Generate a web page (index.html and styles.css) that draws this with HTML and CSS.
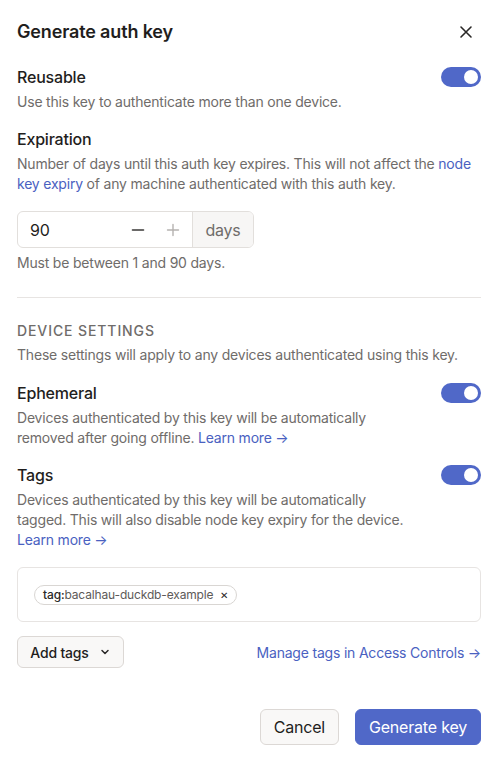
FILE: index.html
```html
<!DOCTYPE html>
<html lang="en">
<head>
<meta charset="utf-8">
<title>Generate auth key</title>
<link rel="stylesheet" href="styles.css">
</head>
<body>
<div class="dialog">
  <header class="dialog-header">
    <h1 class="dialog-title">Generate auth key</h1>
    <button class="close-btn" aria-label="Close">
      <svg width="14" height="14" viewBox="0 0 14 14" fill="none" stroke="#2a2827" stroke-width="1.6" stroke-linecap="round"><path d="M2 2 L12 12 M12 2 L2 12"/></svg>
    </button>
  </header>

  <section class="setting">
    <div class="setting-row">
      <div class="setting-label">Reusable</div>
      <span class="toggle"><span class="knob"></span></span>
    </div>
    <p class="setting-desc">Use this key to authenticate more than one device.</p>
  </section>

  <section class="setting">
    <div class="setting-label">Expiration</div>
    <p class="setting-desc">Number of days until this auth key expires. This will not affect the <a class="link" href="#">node key expiry</a> of any machine authenticated with this auth key.</p>
    <div class="input-group">
      <div class="number-field">
        <span class="number-value">90</span>
        <span class="stepper">
          <svg class="step minus" width="14" height="14" viewBox="0 0 14 14"><path d="M1.5 7 H12.5" stroke="#3a3837" stroke-width="1.6" stroke-linecap="round"/></svg>
          <svg class="step plus" width="14" height="14" viewBox="0 0 14 14"><path d="M1.5 7 H12.5 M7 1.5 V12.5" stroke="#b5b2b0" stroke-width="1.4" stroke-linecap="round"/></svg>
        </span>
      </div>
      <div class="addon">days</div>
    </div>
    <p class="helper">Must be between 1 and 90 days.</p>
  </section>

  <hr class="divider">

  <section class="group">
    <div class="group-title">Device settings</div>
    <p class="group-desc">These settings will apply to any devices authenticated using this key.</p>
  </section>

  <section class="setting">
    <div class="setting-row">
      <div class="setting-label">Ephemeral</div>
      <span class="toggle"><span class="knob"></span></span>
    </div>
    <p class="setting-desc narrow">Devices authenticated by this key will be automatically removed after going offline. <a class="link" href="#">Learn more →</a></p>
  </section>

  <section class="setting">
    <div class="setting-row">
      <div class="setting-label">Tags</div>
      <span class="toggle"><span class="knob"></span></span>
    </div>
    <p class="setting-desc narrow">Devices authenticated by this key will be automatically tagged. This will also disable node key expiry for the device. <a class="link" href="#">Learn more →</a></p>
    <div class="tag-box">
      <span class="chip"><b>tag:</b>bacalhau-duckdb-example<span class="chip-x">✕</span></span>
    </div>
    <div class="tag-actions">
      <button class="btn btn-secondary add-tags">Add tags
        <svg width="12" height="12" viewBox="0 0 12 12" fill="none" stroke="#2a2827" stroke-width="1.5" stroke-linecap="round" stroke-linejoin="round"><path d="M3 4.5 L6 7.5 L9 4.5"/></svg>
      </button>
      <a class="link" href="#">Manage tags in Access Controls →</a>
    </div>
  </section>

  <footer class="dialog-footer">
    <button class="btn btn-secondary btn-lg">Cancel</button>
    <button class="btn btn-primary btn-lg">Generate key</button>
  </footer>
</div>
</body>
</html>
```

FILE: styles.css
```css
* { box-sizing: border-box; }

html, body {
  margin: 0;
  padding: 0;
  background: #ffffff;
}

body {
  font-family: Inter, "Noto Sans", "Liberation Sans", sans-serif;
  color: #1f1e1d;
  letter-spacing: -0.2px;
  -webkit-font-smoothing: antialiased;
}

.dialog {
  width: 464px;
  margin-left: 17px;
  padding-top: 18px;
}

.dialog-header {
  display: flex;
  align-items: center;
  justify-content: space-between;
  height: 28px;
  margin-bottom: 19px;
}

.dialog-title {
  margin: 0;
  font-size: 18px;
  font-weight: 600;
  line-height: 28px;
  letter-spacing: -0.15px;
}

.close-btn {
  border: 0;
  background: none;
  padding: 0;
  margin-right: 8px;
  width: 14px;
  height: 14px;
  display: flex;
}

.setting { margin-bottom: 15px; }

.setting-row {
  display: flex;
  align-items: center;
  justify-content: space-between;
}

.setting-label {
  font-size: 16px;
  font-weight: 500;
  line-height: 24px;
}

.setting-desc,
.group-desc {
  margin: 3px 0 0;
  font-size: 14px;
  line-height: 20px;
  color: #6f6c6a;
}

.group-desc { margin-top: 4px; }

.setting-desc.narrow { max-width: 390px; }

.link {
  color: #4a61c1;
  text-decoration: none;
}

.toggle {
  width: 40px;
  height: 20px;
  border-radius: 10px;
  background: #5068c8;
  display: flex;
  align-items: center;
  justify-content: flex-end;
  padding-right: 3px;
}

.knob {
  width: 14px;
  height: 14px;
  border-radius: 50%;
  background: #fff;
}

.input-group {
  display: flex;
  width: 237px;
  height: 37px;
  margin-top: 17px;
  border: 1px solid #e2dfdc;
  border-radius: 6px;
  overflow: hidden;
}

.number-field {
  flex: 1;
  display: flex;
  align-items: center;
  justify-content: space-between;
  padding: 0 12px 0 12px;
  font-size: 16px;
}

.stepper {
  display: flex;
  gap: 21px;
  align-items: center;
}

.step { display: block; }

.addon {
  width: 61px;
  display: flex;
  align-items: center;
  justify-content: center;
  border-left: 1px solid #e2dfdc;
  background: #f7f6f5;
  color: #6f6c6a;
  font-size: 16px;
}

.helper {
  margin: 5px 0 0;
  font-size: 14px;
  line-height: 20px;
  color: #6f6c6a;
}

.divider {
  border: 0;
  border-top: 1px solid #e7e4e2;
  margin: 24px 0 23px;
}

.group { margin-bottom: 16px; }

.group-title {
  font-size: 14px;
  line-height: 20px;
  font-weight: 500;
  text-transform: uppercase;
  letter-spacing: 0.9px;
  color: #6f6c6a;
}

.tag-box {
  margin-top: 17px;
  height: 55px;
  border: 1px solid #e7e4e2;
  border-radius: 6px;
  padding: 0 16px;
  display: flex;
  align-items: center;
}

.chip {
  display: inline-flex;
  align-items: center;
  height: 20px;
  padding: 0 8px;
  border: 1px solid #d9d6d3;
  border-radius: 10px;
  font-size: 12px;
  letter-spacing: -0.15px;
  color: #5d5a58;
}

.chip b {
  font-weight: 500;
  color: #2a2827;
}

.chip-x {
  margin-left: 7px;
  font-size: 10px;
  color: #2a2827;
}

.tag-actions {
  margin-top: 14px;
  display: flex;
  align-items: center;
  justify-content: space-between;
  font-size: 14px;
}

.btn {
  font-family: inherit;
  letter-spacing: -0.2px;
  border-radius: 6px;
  cursor: pointer;
  display: inline-flex;
  align-items: center;
  justify-content: center;
}

.btn-secondary {
  background: #f9f8f7;
  border: 1px solid #dcd8d5;
  color: #1f1e1d;
}

.add-tags {
  height: 32px;
  width: 107px;
  font-size: 14px;
  font-weight: 500;
  gap: 10px;
  padding: 0;
}

.dialog-footer {
  margin-top: 41px;
  display: flex;
  justify-content: flex-end;
  gap: 16px;
}

.btn-lg {
  height: 36px;
  padding: 0 13px;
  font-size: 16px;
  font-weight: 400;
}

.btn-primary {
  background: #5068c8;
  border: 1px solid #5068c8;
  color: #ffffff;
}
```
